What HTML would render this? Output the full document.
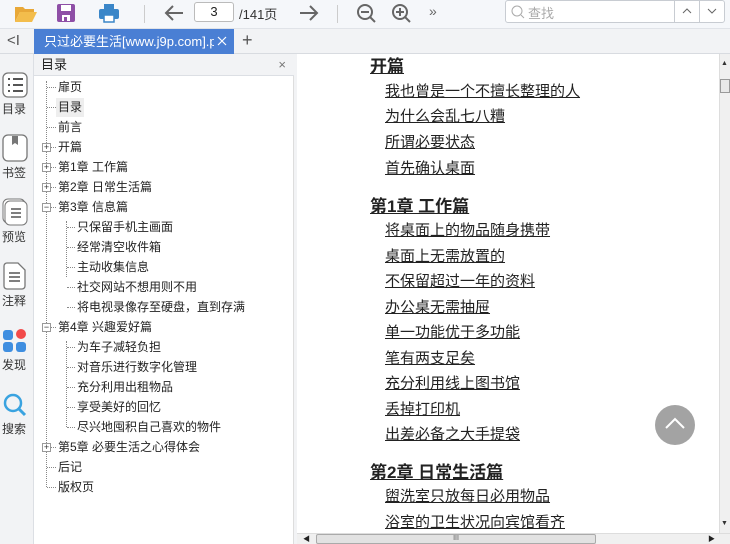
<!DOCTYPE html>
<html><head><meta charset="utf-8"><style>
*{margin:0;padding:0;box-sizing:border-box}
body{width:730px;height:544px;overflow:hidden;background:#f2f3f5;font-family:"Liberation Sans","Noto Sans CJK SC",sans-serif;position:relative;color:#222}
.a{position:absolute}
.tb{left:0;top:0;width:730px;height:29px;background:#f5f7fa;border-bottom:1px solid #e0e3e8}
.tabs{left:0;top:29px;width:730px;height:25px;background:#f2f3f5;border-bottom:1px solid #d8dbe0}
.tab{left:34px;top:29px;width:200px;height:25px;background:#4a7fd4}
.tabt{left:44px;top:29px;width:170px;height:25px;color:#fff;font-size:13px;line-height:25px;white-space:nowrap;overflow:hidden}
.rail{left:0;top:54px;width:34px;height:490px;background:#f2f3f5;border-right:1px solid #dcdfe4}
.rl{font-size:12px;color:#333;width:28px;text-align:center;left:0}
.panel{left:34px;top:54px;width:260px;height:490px;background:#fff;border-right:1px solid #ddd}
.ph{left:0;top:0;width:260px;height:22px;background:#f2f3f5;border-bottom:1px solid #dcdfe4;font-size:13px;line-height:22px;padding-left:7px}
.ti{font-size:12px;line-height:20px;white-space:nowrap;height:20px}
.pm{width:9px;height:9px;border:1px solid #999;background:#fff;font-size:9px;line-height:7px;text-align:center;color:#333}
.page{left:297px;top:54px;width:422px;height:479px;background:#fff}
.h{font-size:17px;font-weight:bold;left:73px;text-decoration:underline;white-space:nowrap}
.it{font-size:15px;left:88px;text-decoration:underline;white-space:nowrap}
.vl{border-left:1px dotted #888}
.hl{border-top:1px dotted #888;height:0}
</style></head><body>
<div class="a tb"></div>
<svg class="a" style="left:14px;top:4px" width="24" height="19"><path d="M1 3h8l2 2h9v3H6L1 18z" fill="#e8a838"/><path d="M6 8h17l-5 10H1z" fill="#f3bd4c"/></svg>
<svg class="a" style="left:56px;top:3px" width="20" height="20"><rect x="1" y="1" width="18" height="18" rx="2" fill="#8e4fa6"/><rect x="5" y="2" width="10" height="6" fill="#fff"/><rect x="6" y="12" width="8" height="6" fill="#fff"/><rect x="8" y="14" width="3" height="4" fill="#8e4fa6"/></svg>
<svg class="a" style="left:98px;top:2px" width="22" height="22"><rect x="6" y="2" width="10" height="6" fill="#3a86c8"/><rect x="1" y="7" width="20" height="10" rx="2" fill="#3a86c8"/><rect x="6" y="13" width="10" height="7" fill="#fff" stroke="#3a86c8" stroke-width="1.5"/></svg>
<div class="a" style="left:144px;top:5px;width:1px;height:18px;background:#ccc"></div>
<svg class="a" style="left:163px;top:3px" width="22" height="20"><path d="M20 10H3M10 3L3 10l7 7" stroke="#666" stroke-width="2" fill="none"/></svg>
<div class="a" style="left:194px;top:2px;width:40px;height:20px;border:1px solid #bbb;border-radius:3px;background:#fff;font-size:13px;text-align:center;line-height:18px">3</div>
<div class="a" style="left:239px;top:4px;font-size:13px;color:#333">/141页</div>
<svg class="a" style="left:298px;top:3px" width="22" height="20"><path d="M2 10h17M12 3l7 7-7 7" stroke="#666" stroke-width="2" fill="none"/></svg>
<div class="a" style="left:337px;top:5px;width:1px;height:18px;background:#ccc"></div>
<svg class="a" style="left:355px;top:2px" width="22" height="22"><circle cx="10" cy="10" r="7" stroke="#666" stroke-width="2" fill="none"/><path d="M6 10h8M15 15l5 5" stroke="#666" stroke-width="2"/></svg>
<svg class="a" style="left:390px;top:2px" width="22" height="22"><circle cx="10" cy="10" r="7" stroke="#666" stroke-width="2" fill="none"/><path d="M6 10h8M10 6v8M15 15l5 5" stroke="#666" stroke-width="2"/></svg>
<div class="a" style="left:429px;top:3px;font-size:14px;color:#666">»</div>
<div class="a" style="left:505px;top:0;width:220px;height:23px;border:1px solid #c8ccd2;border-radius:3px;background:#fff"></div>
<svg class="a" style="left:510px;top:4px" width="16" height="16"><circle cx="7" cy="7" r="5" stroke="#aaa" fill="none"/><path d="M11 11l3 3" stroke="#aaa"/></svg>
<div class="a" style="left:528px;top:3px;font-size:13px;color:#aaa">查找</div>
<div class="a" style="left:674px;top:0;width:1px;height:23px;background:#c8ccd2"></div>
<div class="a" style="left:699px;top:0;width:1px;height:23px;background:#c8ccd2"></div>
<svg class="a" style="left:681px;top:7px" width="12" height="8"><path d="M2 6l4-4 4 4" stroke="#666" fill="none"/></svg>
<svg class="a" style="left:706px;top:7px" width="12" height="8"><path d="M2 2l4 4 4-4" stroke="#666" fill="none"/></svg>
<div class="a tabs"></div>
<div class="a" style="left:7px;top:32px;font-size:15px;color:#555">&lt;I</div>
<div class="a tab"></div>
<div class="a tabt">只过必要生活[www.j9p.com].p<span style="opacity:.6">c</span></div>
<svg class="a" style="left:217px;top:36px" width="10" height="10"><path d="M1 1l8 8M9 1l-8 8" stroke="#fff" stroke-width="1.2"/></svg>
<div class="a" style="left:242px;top:30px;color:#555;font-size:18px">+</div>
<div class="a rail"></div>
<svg class="a" style="left:2px;top:72px" width="26" height="26"><rect x="1" y="1" width="24" height="24" rx="5" fill="#fff" stroke="#777" stroke-width="1.3"/><path d="M6 7h2M11 7h10M6 13h2M11 13h10M6 19h2M11 19h10" stroke="#555" stroke-width="2"/></svg>
<div class="a rl" style="top:100px">目录</div>
<svg class="a" style="left:2px;top:134px" width="26" height="28"><rect x="1" y="1" width="24" height="26" rx="5" fill="#fff" stroke="#777" stroke-width="1.3"/><path d="M10 2v9l3-2 3 2V2" fill="#777"/></svg>
<div class="a rl" style="top:164px">书签</div>
<svg class="a" style="left:2px;top:198px" width="26" height="28"><rect x="1" y="1" width="22" height="24" rx="5" fill="#fff" stroke="#777"/><rect x="3" y="3" width="22" height="24" rx="5" fill="#fff" stroke="#777"/><path d="M9 11h10M9 15h10M9 19h10" stroke="#555" stroke-width="1.5"/></svg>
<div class="a rl" style="top:228px">预览</div>
<svg class="a" style="left:3px;top:262px" width="24" height="28"><path d="M4 1h11l7 7v16a3 3 0 0 1-3 3H4a3 3 0 0 1-3-3V4a3 3 0 0 1 3-3z" fill="#fff" stroke="#777" stroke-width="1.3"/><path d="M6 11h11M6 15h11M6 19h11" stroke="#555" stroke-width="1.5"/></svg>
<div class="a rl" style="top:292px">注释</div>
<svg class="a" style="left:2px;top:327px" width="26" height="26"><rect x="1" y="3" width="10" height="10" rx="3" fill="#3f8ee0"/><circle cx="19" cy="7" r="5" fill="#f24a4a"/><rect x="1" y="15" width="10" height="10" rx="3" fill="#3f8ee0"/><rect x="14" y="15" width="10" height="10" rx="3" fill="#3f8ee0"/></svg>
<div class="a rl" style="top:356px">发现</div>
<svg class="a" style="left:2px;top:392px" width="26" height="26"><circle cx="11" cy="11" r="8" stroke="#3aa3e0" stroke-width="2.5" fill="none"/><path d="M17 17l6 6" stroke="#3aa3e0" stroke-width="3"/></svg>
<div class="a rl" style="top:420px">搜索</div>

<div class="a panel">
<div class="a ph">目录<span style="position:absolute;right:8px;color:#777">×</span></div>
<div class="a vl" style="left:12px;top:27px;height:406px"></div>
<div class="a vl" style="left:32px;top:167px;height:56px"></div>
<div class="a vl" style="left:32px;top:287px;height:86px"></div>
</div>
<div class="a" style="left:0;top:0">
<div class="a hl" style="left:47px;top:87px;width:9px"></div><div class="a ti" style="left:58px;top:77px">扉页</div>
<div class="a" style="left:56px;top:98px;width:28px;height:19px;background:#eee"></div>
<div class="a hl" style="left:47px;top:107px;width:9px"></div><div class="a ti" style="left:58px;top:97px">目录</div>
<div class="a hl" style="left:47px;top:127px;width:9px"></div><div class="a ti" style="left:58px;top:117px">前言</div>
<div class="a hl" style="left:47px;top:147px;width:9px"></div><div class="a pm" style="left:42px;top:143px">+</div><div class="a ti" style="left:58px;top:137px">开篇</div>
<div class="a hl" style="left:47px;top:167px;width:9px"></div><div class="a pm" style="left:42px;top:163px">+</div><div class="a ti" style="left:58px;top:157px">第1章 工作篇</div>
<div class="a hl" style="left:47px;top:187px;width:9px"></div><div class="a pm" style="left:42px;top:183px">+</div><div class="a ti" style="left:58px;top:177px">第2章 日常生活篇</div>
<div class="a hl" style="left:47px;top:207px;width:9px"></div><div class="a pm" style="left:42px;top:203px">−</div><div class="a ti" style="left:58px;top:197px">第3章 信息篇</div>
<div class="a hl" style="left:67px;top:227px;width:8px"></div><div class="a ti" style="left:77px;top:217px">只保留手机主画面</div>
<div class="a hl" style="left:67px;top:247px;width:8px"></div><div class="a ti" style="left:77px;top:237px">经常清空收件箱</div>
<div class="a hl" style="left:67px;top:267px;width:8px"></div><div class="a ti" style="left:77px;top:257px">主动收集信息</div>
<div class="a hl" style="left:67px;top:287px;width:8px"></div><div class="a ti" style="left:77px;top:277px">社交网站不想用则不用</div>
<div class="a hl" style="left:67px;top:307px;width:8px"></div><div class="a ti" style="left:77px;top:297px">将电视录像存至硬盘，直到存满</div>
<div class="a hl" style="left:47px;top:327px;width:9px"></div><div class="a pm" style="left:42px;top:323px">−</div><div class="a ti" style="left:58px;top:317px">第4章 兴趣爱好篇</div>
<div class="a hl" style="left:67px;top:347px;width:8px"></div><div class="a ti" style="left:77px;top:337px">为车子减轻负担</div>
<div class="a hl" style="left:67px;top:367px;width:8px"></div><div class="a ti" style="left:77px;top:357px">对音乐进行数字化管理</div>
<div class="a hl" style="left:67px;top:387px;width:8px"></div><div class="a ti" style="left:77px;top:377px">充分利用出租物品</div>
<div class="a hl" style="left:67px;top:407px;width:8px"></div><div class="a ti" style="left:77px;top:397px">享受美好的回忆</div>
<div class="a hl" style="left:67px;top:427px;width:8px"></div><div class="a ti" style="left:77px;top:417px">尽兴地囤积自己喜欢的物件</div>
<div class="a hl" style="left:47px;top:447px;width:9px"></div><div class="a pm" style="left:42px;top:443px">+</div><div class="a ti" style="left:58px;top:437px">第5章 必要生活之心得体会</div>
<div class="a hl" style="left:47px;top:467px;width:9px"></div><div class="a ti" style="left:58px;top:457px">后记</div>
<div class="a hl" style="left:47px;top:487px;width:9px"></div><div class="a ti" style="left:58px;top:477px">版权页</div>
</div>

<div class="a page">
<div class="a h" style="top:-2px">开篇</div>
<div class="a it" style="top:26px">我也曾是一个不擅长整理的人</div>
<div class="a it" style="top:51px">为什么会乱七八糟</div>
<div class="a it" style="top:77px">所谓必要状态</div>
<div class="a it" style="top:103px">首先确认桌面</div>
<div class="a h" style="top:138px">第1章 工作篇</div>
<div class="a it" style="top:165px">将桌面上的物品随身携带</div>
<div class="a it" style="top:191px">桌面上无需放置的</div>
<div class="a it" style="top:216px">不保留超过一年的资料</div>
<div class="a it" style="top:242px">办公桌无需抽屉</div>
<div class="a it" style="top:267px">单一功能优于多功能</div>
<div class="a it" style="top:293px">笔有两支足矣</div>
<div class="a it" style="top:318px">充分利用线上图书馆</div>
<div class="a it" style="top:344px">丢掉打印机</div>
<div class="a it" style="top:369px">出差必备之大手提袋</div>
<div class="a h" style="top:404px">第2章 日常生活篇</div>
<div class="a it" style="top:431px">盥洗室只放每日必用物品</div>
<div class="a it" style="top:457px">浴室的卫生状况向宾馆看齐</div>
</div>
<div class="a" style="left:655px;top:405px;width:40px;height:40px;border-radius:50%;background:#a3a3a3"></div>
<svg class="a" style="left:662px;top:414px" width="26" height="20"><path d="M4 14l9-9 9 9" stroke="#fff" stroke-width="2" fill="none"/></svg>
<div class="a" style="left:719px;top:54px;width:11px;height:479px;background:#f0f0f0;border-left:1px solid #ddd"></div>
<div class="a" style="left:720px;top:79px;width:10px;height:14px;background:#e8e8e8;border:1px solid #999"></div>
<div class="a" style="left:721px;top:60px;font-size:7px;color:#333">▲</div>
<div class="a" style="left:721px;top:520px;font-size:7px;color:#333">▼</div>
<div class="a" style="left:297px;top:533px;width:433px;height:11px;background:#f0f0f0;border-top:1px solid #ddd"></div>
<div class="a" style="left:316px;top:534px;width:280px;height:10px;background:#e2e2e2;border:1px solid #aaa;border-radius:2px;font-size:7px;text-align:center;line-height:8px;color:#555">III</div>
<div class="a" style="left:303px;top:534px;font-size:7px">◀</div>
<div class="a" style="left:708px;top:534px;font-size:7px">▶</div>
</body></html>
